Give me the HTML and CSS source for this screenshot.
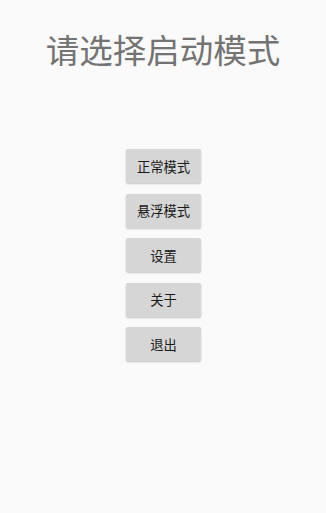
FILE: index.html
```html
<!DOCTYPE html>
<html lang="zh-CN">
<head>
  <meta charset="UTF-8">
  <meta name="viewport" content="width=device-width, initial-scale=1.0">
  <title>请选择启动模式</title>
  <link rel="stylesheet" href="styles.css">
</head>
<body>
  <div class="launch-container">
    <h1 class="launch-title">请选择启动模式</h1>

    <div class="mode-list">
      <button class="btn-mode">正常模式</button>
      <button class="btn-mode">悬浮模式</button>
      <button class="btn-mode">设置</button>
      <button class="btn-mode">关于</button>
      <button class="btn-mode">退出</button>
    </div>
  </div>
</body>
</html>
```
FILE: styles.css
```css
:root {
  --bg: #fafafa;
  --title: #737373;
  --btn-bg: #d6d6d6;
  --btn-text: #1a1a1a;
}

* {
  margin: 0;
  padding: 0;
  box-sizing: border-box;
  font-family: Roboto, "Noto Sans CJK SC", sans-serif;
}

body {
  background-color: var(--bg);
  min-height: 513px;
}

.launch-container {
  display: flex;
  flex-direction: column;
  align-items: center;
  padding-top: 30px;
}

.launch-title {
  font-size: 33.5px;
  font-weight: 400;
  line-height: 44px;
  color: var(--title);
}

/* Mode buttons */
.mode-list {
  display: flex;
  flex-direction: column;
  align-items: center;
  gap: 10.5px;
  margin-top: 75px;
  margin-left: 1px;
}

.btn-mode {
  width: 75px;
  height: 34px;
  background-color: var(--btn-bg);
  color: var(--btn-text);
  border: none;
  border-radius: 2px;
  font-size: 13.3px;
  box-shadow: 0 1px 2px rgba(0, 0, 0, 0.22);
  cursor: pointer;
}
```
